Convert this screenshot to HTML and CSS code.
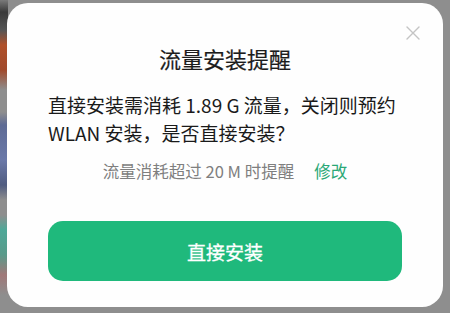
FILE: index.html
```html
<!DOCTYPE html>
<html lang="zh-CN">
<head>
<meta charset="utf-8">
<title>流量安装提醒</title>
<link rel="stylesheet" href="styles.css">
</head>
<body>
<div class="dialog">
  <button class="close" aria-label="关闭">
    <svg viewBox="0 0 14 14" width="14" height="14"><path d="M1 1L13 13M13 1L1 13" stroke="#c4c4c4" stroke-width="1.4" fill="none" stroke-linecap="round"/></svg>
  </button>
  <h1 class="title">流量安装提醒</h1>
  <p class="message">直接安装需消耗 1.89 G 流量，关闭则预约 WLAN 安装，是否直接安装？</p>
  <div class="threshold">
    <span class="threshold-text">流量消耗超过 20 M 时提醒</span>
    <a class="threshold-edit">修改</a>
  </div>
  <button class="primary">直接安装</button>
</div>
</body>
</html>
```

FILE: styles.css
```css
html, body {
  margin: 0;
  height: 100%;
}
body {
  box-sizing: border-box;
  padding: 3px 7px 6px 7px;
  background:
    linear-gradient(to bottom,
      #7a7a7a 0px, #3a3a3a 12px, #555 30px, #b0502a 45px, #a04a2c 70px, #8e8e8e 90px,
      #8e8e8e 112px, #5e6b95 125px, #6a78a8 160px, #505c80 185px, #8e8e8e 200px,
      #8e8e8e 215px, #4ea898 230px, #5a9a8a 255px, #a07878 275px, #8e8e8e 295px) left top / 8px 100% no-repeat,
    #8e8e8e;
  font-family: "Noto Sans CJK SC", "Noto Sans", sans-serif;
}
.dialog {
  position: relative;
  box-sizing: border-box;
  height: 304px;
  background: #fefefe;
  border-radius: 21px;
  padding: 40px 41px 25px 41px;
  display: flex;
  flex-direction: column;
}
.close {
  position: absolute;
  top: 23px;
  right: 23px;
  width: 14px;
  height: 14px;
  padding: 0;
  border: 0;
  background: none;
  display: flex;
}
.title {
  margin: 0;
  font-size: 22px;
  line-height: 30px;
  font-weight: 400;
  -webkit-text-stroke: 0.2px #1c1c1c;
  color: #1c1c1c;
  text-align: center;
}
.message {
  margin: 18px 0 0 0;
  font-size: 19px;
  line-height: 28px;
  color: #1a1a1a;
  font-weight: 400;
}
.threshold {
  margin-top: 13px;
  display: flex;
  justify-content: center;
  align-items: center;
  gap: 20px;
  font-size: 16.5px;
  line-height: 22px;
}
.threshold-text {
  color: #7f7f7f;
}
.threshold-edit {
  color: #2aa876;
}
.primary {
  margin-top: 39px;
  height: 60px;
  border: 0;
  border-radius: 15px;
  background: #1fb97c;
  color: #ffffff;
  font-family: inherit;
  font-size: 19px;
  font-weight: 400;
  -webkit-text-stroke: 0.3px #ffffff;
  padding: 0;
}
```
